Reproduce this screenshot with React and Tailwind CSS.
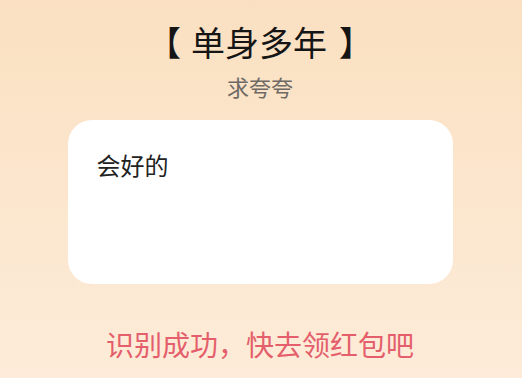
export default function App() {
  return (
    <div
      className="flex h-[378px] w-[522px] flex-col items-center bg-gradient-to-b from-[#fae0c1] to-[#fdecd9] pr-[2px] pt-[21px]"
      style={{ fontFamily: '"Noto Sans CJK SC", "Noto Sans", sans-serif' }}
    >
      <h1 className="flex text-[34px] font-normal leading-[42px] text-[#151515]">
        <span>【</span>
        <span className="ml-[10px] mr-[12px]">单身多年</span>
        <span>】</span>
      </h1>
      <p className="mt-[8px] text-[22px] leading-[30px] text-[#6e6964]">求夸夸</p>
      <div className="mt-[19px] h-[164px] w-[385px] rounded-[24px] bg-white px-[29px] pt-[29px]">
        <p className="text-[24px] leading-[32px] text-[#222]">会好的</p>
      </div>
      <p className="mt-[42px] text-[28px] leading-[36px] text-[#e45f6b]">
        识别成功，快去领红包吧
      </p>
    </div>
  );
}
